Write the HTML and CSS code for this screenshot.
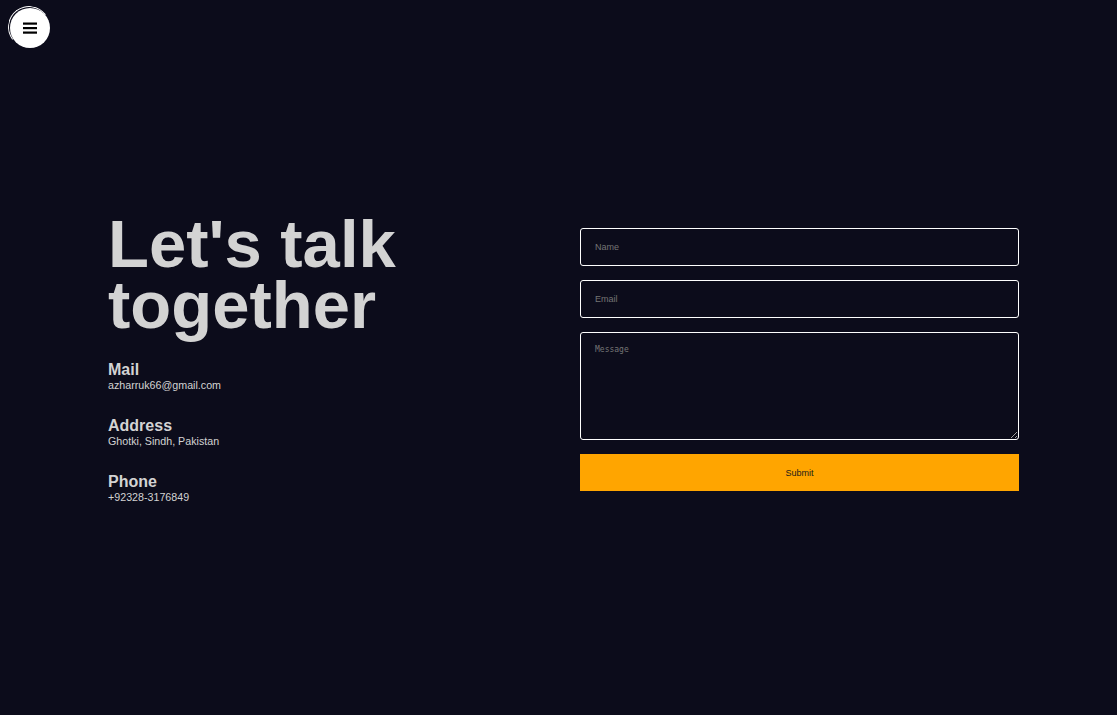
FILE: index.html
```html
<!DOCTYPE html>
<html lang="en">
<head>
<meta charset="utf-8">
<title>Contact</title>
<link rel="stylesheet" href="styles.css">
</head>
<body>
<button class="menu-btn" aria-label="Menu">
  <svg width="14" height="12" viewBox="0 0 14 12"><rect x="0" y="0.5" width="14" height="2.2" fill="#000"/><rect x="0" y="5" width="14" height="2.2" fill="#000"/><rect x="0" y="9.5" width="14" height="2.2" fill="#000"/></svg>
</button>
<main class="contact">
  <div class="info">
    <h1 class="title">Let's talk together</h1>
    <div class="item">
      <h3>Mail</h3>
      <p>azharruk66@gmail.com</p>
    </div>
    <div class="item">
      <h3>Address</h3>
      <p>Ghotki, Sindh, Pakistan</p>
    </div>
    <div class="item">
      <h3>Phone</h3>
      <p>+92328-3176849</p>
    </div>
  </div>
  <form class="form">
    <input type="text" placeholder="Name">
    <input type="email" placeholder="Email">
    <textarea placeholder="Message"></textarea>
    <button type="button" class="submit">Submit</button>
  </form>
</main>
</body>
</html>
```
FILE: styles.css
```css
* { box-sizing: border-box; }
html, body { margin: 0; padding: 0; }
body {
  background: #0c0c1b;
  font-family: "Liberation Sans", Arial, sans-serif;
  color: #d3d3d3;
  min-height: 715px;
}
.menu-btn {
  position: absolute;
  left: 10px;
  top: 8px;
  width: 40px;
  height: 40px;
  border-radius: 50%;
  border: none;
  background: #fff;
  padding: 0;
  display: flex;
  align-items: center;
  justify-content: center;
}
.menu-btn::before {
  content: "";
  position: absolute;
  left: -2px;
  top: -2px;
  width: 40px;
  height: 40px;
  border-radius: 50%;
  border: 1px solid transparent;
  border-top-color: #fff;
  border-left-color: #fff;
  transform: rotate(8deg);
}
.contact {
  min-height: 715px;
  display: grid;
  grid-template-columns: 472px 439px;
  align-items: center;
  padding-left: 108px;
}
.info { padding-top: 1px; }
.title {
  margin: 0 0 26px;
  font-size: 67px;
  line-height: 61px;
  font-weight: 700;
  color: #d3d3d3;
  width: 340px;
}
.item { margin-bottom: 25px; }
.item:last-child { margin-bottom: 0; }
.item h3 {
  margin: 0;
  font-size: 16px;
  line-height: 18px;
  font-weight: 700;
  color: #d3d3d3;
}
.item p {
  margin: 0;
  font-size: 10.7px;
  line-height: 13px;
  color: #d3d3d3;
}
.form {
  display: flex;
  flex-direction: column;
  gap: 14px;
  padding-top: 4px;
}
.form input, .form textarea {
  background: transparent;
  border: 1px solid #fff;
  border-radius: 3px;
  color: #fff;
  padding: 0 14px;
  font-size: 9px;
  font-family: "Liberation Sans", Arial, sans-serif;
  outline: none;
}
.form input { height: 38px; }
.form textarea {
  height: 108px;
  padding: 12px 14px;
  font-family: "DejaVu Sans Mono", monospace;
  font-size: 8px;
  resize: vertical;
}
.form ::placeholder { color: #757575; }
.submit {
  height: 37px;
  border: none;
  background: #ffa500;
  color: #1a1a1a;
  font-family: "Liberation Sans", Arial, sans-serif;
  font-size: 9px;
}
```
